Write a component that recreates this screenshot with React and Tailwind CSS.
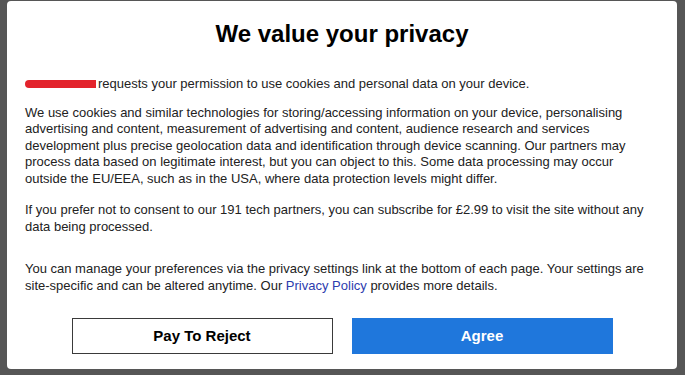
import React from 'react';

const App = () => {
  return (
    <div className="w-[685px] h-[375px] bg-[#565656] pt-[1px] pl-[7px] overflow-hidden" style={{ fontFamily: '"Liberation Sans", Arial, sans-serif' }}>
      <div className="w-[670px] h-[368px] bg-white rounded-[4px] pt-[19px] px-[18px] pb-[15px] flex flex-col text-[#222]">
        <h1 className="text-[24px] leading-[28px] font-bold text-center text-black">We value your privacy</h1>

        <p className="mt-[28px] text-[13px] leading-[16.5px]">
          <span className="inline-block align-middle w-[71px] h-[8px] mr-[2px] -mt-[1px] rounded-l-full rounded-r-[6px] bg-[#e3232c]"></span>
          requests your permission to use cookies and personal data on your device.
        </p>

        <p className="mt-[12px] text-[13px] leading-[16.5px] pr-[8px]">
          We use cookies and similar technologies for storing/accessing information on your device, personalising advertising and content, measurement of advertising and content, audience research and services development plus precise geolocation data and identification through device scanning. Our partners may process data based on legitimate interest, but you can object to this. Some data processing may occur outside the EU/EEA, such as in the USA, where data protection levels might differ.
        </p>

        <p className="mt-[15px] text-[13px] leading-[16.5px] pr-[8px]">
          If you prefer not to consent to our 191 tech partners, you can subscribe for £2.99 to visit the site without any data being processed.
        </p>

        <p className="mt-[26px] text-[13px] leading-[16.5px] pr-[8px]">
          You can manage your preferences via the privacy settings link at the bottom of each page. Your settings are site-specific and can be altered anytime. Our <span className="text-[#2c3cae] cursor-pointer">Privacy Policy</span> provides more details.
        </p>

        <div className="mt-auto flex justify-center gap-[19px]">
          <button className="w-[261px] h-[36px] bg-white border border-[#3a3a3a] text-[15px] font-bold text-black">
            Pay To Reject
          </button>
          <button className="w-[261px] h-[36px] bg-[#1f77dc] text-[15px] font-bold text-white">
            Agree
          </button>
        </div>
      </div>
    </div>
  );
};

export default App;
